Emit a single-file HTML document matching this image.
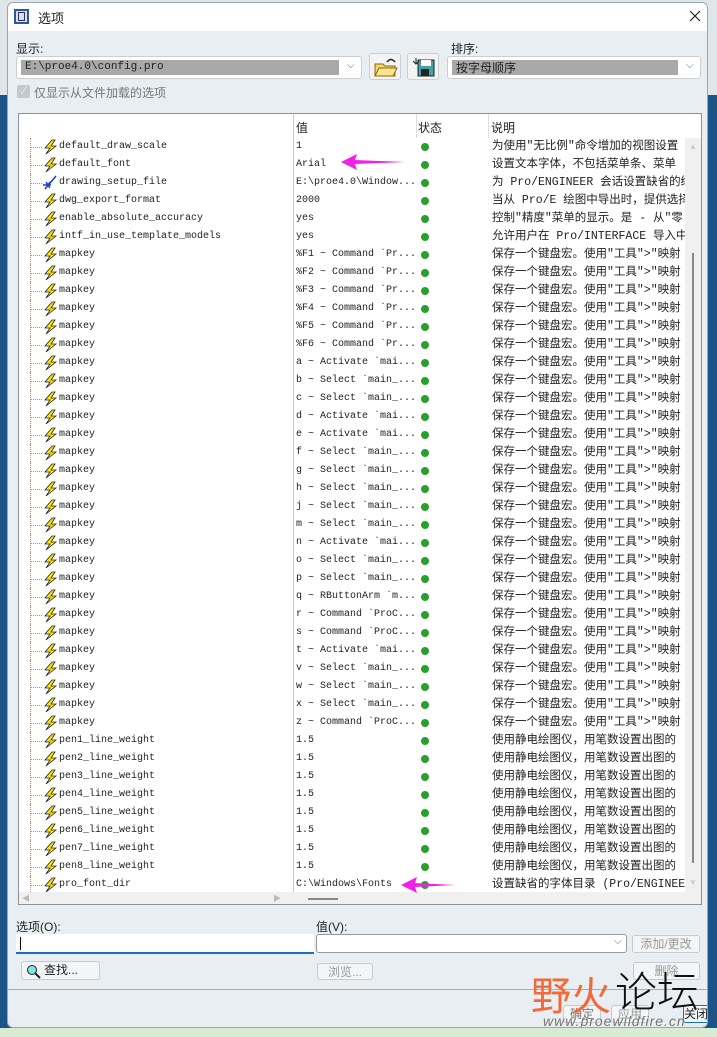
<!DOCTYPE html>
<html><head><meta charset="utf-8">
<style>
*{margin:0;padding:0;box-sizing:border-box}
body{width:717px;height:1037px;position:relative;overflow:hidden;background:#1d5487;font-family:"Liberation Sans","Noto Sans CJK SC",sans-serif;}
.a{position:absolute}
#dlg{left:7px;top:2px;width:701px;height:1026px;background:#e8eef1;border-radius:6px;overflow:hidden;border:1px solid #9aa5ad}
#title{left:0;top:0;width:701px;height:28px;background:#fff}
.lbl{font-size:12px;color:#222}
.box{background:#fff;border:1px solid #c9cfd4;border-radius:3px}
.sel{background:#a9a9a9;font-family:"Liberation Mono",monospace;font-size:11px;color:#222;line-height:17px;padding-left:4px}
.btn{background:#f3f5f7;border:1px solid #c5cbd0;border-radius:3px;font-size:12px;color:#999;text-align:center;line-height:17px}
#list{left:10px;top:110px;width:684px;height:792px;background:#fff;border:1px solid #8c9298}
.row{position:absolute;left:0;height:18px;width:666px;font-family:"Liberation Mono",monospace;font-size:10px;color:#222;line-height:18px;white-space:nowrap}
.row .n{position:absolute;left:40px}
.row .v{position:absolute;left:277px}
.row .d{position:absolute;left:473px;width:193px;overflow:hidden;font-family:"Liberation Mono","Noto Sans CJK SC",monospace;font-size:11.5px}
.row .dot{position:absolute;left:402px;top:5px;width:8px;height:8px;border-radius:50%;background:#2aa02a}
.row .t{position:absolute;left:12px;top:9px;width:11px;border-top:1px dotted #999}
.row .tv{position:absolute;left:11px;top:0;height:18px;border-left:1px dotted #999}
.row svg{position:absolute;left:23px;top:1px}
</style></head><body>
<div class="a" style="left:0;top:0;width:717px;height:95px;background:#dfe6ea"></div>
<div class="a" style="left:0;top:1028px;width:717px;height:9px;background:#d8ecd2"></div>
<div id="dlg" class="a">
 <div id="title" class="a">
  <div class="a" style="left:6px;top:6px;width:15px;height:15px;border:2px solid #2a5a9a;background:#dde"></div>
  <div class="a" style="left:10px;top:9px;width:7px;height:9px;border:1px solid #335"></div>
  <div class="a lbl" style="left:30px;top:5px;font-size:13px">选项</div>
  <svg class="a" style="left:681px;top:7px" width="12" height="12"><path d="M1 1L11 11M11 1L1 11" stroke="#222" stroke-width="1.2"/></svg>
 </div>
 <div class="a lbl" style="left:8px;top:37px">显示:</div>
 <div class="a box" style="left:8px;top:53px;width:346px;height:23px"><div class="a sel" style="left:4px;top:3px;width:318px;height:15px;line-height:15px">E:\proe4.0\config.pro</div><div class="a" style="left:330px;top:3px;font-size:10px;color:#666">⌵</div></div>
 <div class="a box" style="left:361px;top:50px;width:32px;height:27px;background:#f4f4f4"><svg width="26" height="22" style="position:absolute;left:3px;top:2px"><path d="M2 8h8l2 2h10v10H2z" fill="#f4d36a" stroke="#8a6a10"/><path d="M2 20l4-8h18l-4 8z" fill="#fce48a" stroke="#8a6a10"/><path d="M14 6q4-5 8 0" stroke="#222" fill="none" stroke-width="1.5"/></svg></div>
 <div class="a box" style="left:399px;top:50px;width:32px;height:27px;background:#f4f4f4"><svg width="26" height="22" style="position:absolute;left:4px;top:2px"><rect x="6" y="4" width="16" height="16" fill="#4aa0a8" stroke="#222"/><rect x="9" y="4" width="10" height="6" fill="#fff"/><rect x="9" y="13" width="8" height="7" fill="#222"/><path d="M4 2v6M1 5l3 3 3-3" stroke="#222" fill="none"/></svg></div>
 <div class="a lbl" style="left:443px;top:37px">排序:</div>
 <div class="a box" style="left:439px;top:53px;width:254px;height:23px"><div class="a sel" style="left:4px;top:3px;width:226px;height:15px;line-height:15px;font-family:'Noto Sans CJK SC',sans-serif;font-size:12px">按字母顺序</div><div class="a" style="left:238px;top:3px;font-size:10px;color:#666">⌵</div></div>
 <div class="a" style="left:9px;top:82px;width:13px;height:13px;background:#c5c9cc;border-radius:2px;color:#eee;font-size:10px;line-height:13px;text-align:center">✓</div>
 <div class="a lbl" style="left:26px;top:81px;color:#777">仅显示从文件加载的选项</div>

 <div id="list" class="a">
  <div class="a" style="left:274px;top:0;width:1px;height:790px;background:#ccc"></div>
  <div class="a lbl" style="left:277px;top:5px">值</div>
  <div class="a" style="left:397px;top:0;width:1px;height:24px;background:#ddd"></div>
  <div class="a lbl" style="left:399px;top:5px">状态</div>
  <div class="a" style="left:469px;top:0;width:1px;height:24px;background:#ddd"></div>
  <div class="a lbl" style="left:472px;top:5px">说明</div>
  <div class="a" style="left:666px;top:24px;width:16px;height:754px;background:#f0f0f0"><div class="a" style="left:7px;top:115px;width:2px;height:610px;background:#888"></div><div class="a" style="left:4px;top:4px;font-size:8px;color:#ccc">▲</div><div class="a" style="left:4px;top:740px;font-size:8px;color:#ccc">▼</div></div>
  <div class="a" style="left:0;top:778px;width:682px;height:12px;background:#f0f0f0"><div class="a" style="left:3px;top:1px;font-size:8px;color:#bbb">◀</div><div class="a" style="left:254px;top:1px;font-size:8px;color:#bbb">▶</div><div class="a" style="left:289px;top:6px;width:30px;height:2px;background:#888"></div></div>
  <div class="a" style="left:0;top:24px;width:666px;height:754px;overflow:hidden" id="rows">
<div class="row" style="top:0px"><div class="tv"></div><div class="t"></div><svg width="16" height="16"><path d="M10 1L3 9h5l-4 6 10-8H9l4-6z" fill="#ffe800" stroke="#222" stroke-width=".8"/></svg><span class="n">default_draw_scale</span><span class="v">1</span><span class="dot"></span><span class="d">为使用"无比例"命令增加的视图设置</span></div>
<div class="row" style="top:18px"><div class="tv"></div><div class="t"></div><svg width="16" height="16"><path d="M10 1L3 9h5l-4 6 10-8H9l4-6z" fill="#ffe800" stroke="#222" stroke-width=".8"/></svg><span class="n">default_font</span><span class="v">Arial</span><span class="dot"></span><span class="d">设置文本字体，不包括菜单条、菜单</span></div>
<div class="row" style="top:36px"><div class="tv"></div><div class="t"></div><svg width="16" height="16"><path d="M14 1L3 14M1 10h8M4 7l4 6M8 7l-4 6" stroke="#1a3ad0" stroke-width="1.5" fill="none"/></svg><span class="n">drawing_setup_file</span><span class="v">E:\proe4.0\Window...</span><span class="dot"></span><span class="d">为 Pro/ENGINEER 会话设置缺省的绘</span></div>
<div class="row" style="top:54px"><div class="tv"></div><div class="t"></div><svg width="16" height="16"><path d="M10 1L3 9h5l-4 6 10-8H9l4-6z" fill="#ffe800" stroke="#222" stroke-width=".8"/></svg><span class="n">dwg_export_format</span><span class="v">2000</span><span class="dot"></span><span class="d">当从 Pro/E 绘图中导出时，提供选择</span></div>
<div class="row" style="top:72px"><div class="tv"></div><div class="t"></div><svg width="16" height="16"><path d="M10 1L3 9h5l-4 6 10-8H9l4-6z" fill="#ffe800" stroke="#222" stroke-width=".8"/></svg><span class="n">enable_absolute_accuracy</span><span class="v">yes</span><span class="dot"></span><span class="d">控制"精度"菜单的显示。是 - 从"零</span></div>
<div class="row" style="top:90px"><div class="tv"></div><div class="t"></div><svg width="16" height="16"><path d="M10 1L3 9h5l-4 6 10-8H9l4-6z" fill="#ffe800" stroke="#222" stroke-width=".8"/></svg><span class="n">intf_in_use_template_models</span><span class="v">yes</span><span class="dot"></span><span class="d">允许用户在 Pro/INTERFACE 导入中使</span></div>
<div class="row" style="top:108px"><div class="tv"></div><div class="t"></div><svg width="16" height="16"><path d="M10 1L3 9h5l-4 6 10-8H9l4-6z" fill="#ffe800" stroke="#222" stroke-width=".8"/></svg><span class="n">mapkey</span><span class="v">%F1 ~ Command `Pr...</span><span class="dot"></span><span class="d">保存一个键盘宏。使用"工具">"映射</span></div>
<div class="row" style="top:126px"><div class="tv"></div><div class="t"></div><svg width="16" height="16"><path d="M10 1L3 9h5l-4 6 10-8H9l4-6z" fill="#ffe800" stroke="#222" stroke-width=".8"/></svg><span class="n">mapkey</span><span class="v">%F2 ~ Command `Pr...</span><span class="dot"></span><span class="d">保存一个键盘宏。使用"工具">"映射</span></div>
<div class="row" style="top:144px"><div class="tv"></div><div class="t"></div><svg width="16" height="16"><path d="M10 1L3 9h5l-4 6 10-8H9l4-6z" fill="#ffe800" stroke="#222" stroke-width=".8"/></svg><span class="n">mapkey</span><span class="v">%F3 ~ Command `Pr...</span><span class="dot"></span><span class="d">保存一个键盘宏。使用"工具">"映射</span></div>
<div class="row" style="top:162px"><div class="tv"></div><div class="t"></div><svg width="16" height="16"><path d="M10 1L3 9h5l-4 6 10-8H9l4-6z" fill="#ffe800" stroke="#222" stroke-width=".8"/></svg><span class="n">mapkey</span><span class="v">%F4 ~ Command `Pr...</span><span class="dot"></span><span class="d">保存一个键盘宏。使用"工具">"映射</span></div>
<div class="row" style="top:180px"><div class="tv"></div><div class="t"></div><svg width="16" height="16"><path d="M10 1L3 9h5l-4 6 10-8H9l4-6z" fill="#ffe800" stroke="#222" stroke-width=".8"/></svg><span class="n">mapkey</span><span class="v">%F5 ~ Command `Pr...</span><span class="dot"></span><span class="d">保存一个键盘宏。使用"工具">"映射</span></div>
<div class="row" style="top:198px"><div class="tv"></div><div class="t"></div><svg width="16" height="16"><path d="M10 1L3 9h5l-4 6 10-8H9l4-6z" fill="#ffe800" stroke="#222" stroke-width=".8"/></svg><span class="n">mapkey</span><span class="v">%F6 ~ Command `Pr...</span><span class="dot"></span><span class="d">保存一个键盘宏。使用"工具">"映射</span></div>
<div class="row" style="top:216px"><div class="tv"></div><div class="t"></div><svg width="16" height="16"><path d="M10 1L3 9h5l-4 6 10-8H9l4-6z" fill="#ffe800" stroke="#222" stroke-width=".8"/></svg><span class="n">mapkey</span><span class="v">a ~ Activate `mai...</span><span class="dot"></span><span class="d">保存一个键盘宏。使用"工具">"映射</span></div>
<div class="row" style="top:234px"><div class="tv"></div><div class="t"></div><svg width="16" height="16"><path d="M10 1L3 9h5l-4 6 10-8H9l4-6z" fill="#ffe800" stroke="#222" stroke-width=".8"/></svg><span class="n">mapkey</span><span class="v">b ~ Select `main_...</span><span class="dot"></span><span class="d">保存一个键盘宏。使用"工具">"映射</span></div>
<div class="row" style="top:252px"><div class="tv"></div><div class="t"></div><svg width="16" height="16"><path d="M10 1L3 9h5l-4 6 10-8H9l4-6z" fill="#ffe800" stroke="#222" stroke-width=".8"/></svg><span class="n">mapkey</span><span class="v">c ~ Select `main_...</span><span class="dot"></span><span class="d">保存一个键盘宏。使用"工具">"映射</span></div>
<div class="row" style="top:270px"><div class="tv"></div><div class="t"></div><svg width="16" height="16"><path d="M10 1L3 9h5l-4 6 10-8H9l4-6z" fill="#ffe800" stroke="#222" stroke-width=".8"/></svg><span class="n">mapkey</span><span class="v">d ~ Activate `mai...</span><span class="dot"></span><span class="d">保存一个键盘宏。使用"工具">"映射</span></div>
<div class="row" style="top:288px"><div class="tv"></div><div class="t"></div><svg width="16" height="16"><path d="M10 1L3 9h5l-4 6 10-8H9l4-6z" fill="#ffe800" stroke="#222" stroke-width=".8"/></svg><span class="n">mapkey</span><span class="v">e ~ Activate `mai...</span><span class="dot"></span><span class="d">保存一个键盘宏。使用"工具">"映射</span></div>
<div class="row" style="top:306px"><div class="tv"></div><div class="t"></div><svg width="16" height="16"><path d="M10 1L3 9h5l-4 6 10-8H9l4-6z" fill="#ffe800" stroke="#222" stroke-width=".8"/></svg><span class="n">mapkey</span><span class="v">f ~ Select `main_...</span><span class="dot"></span><span class="d">保存一个键盘宏。使用"工具">"映射</span></div>
<div class="row" style="top:324px"><div class="tv"></div><div class="t"></div><svg width="16" height="16"><path d="M10 1L3 9h5l-4 6 10-8H9l4-6z" fill="#ffe800" stroke="#222" stroke-width=".8"/></svg><span class="n">mapkey</span><span class="v">g ~ Select `main_...</span><span class="dot"></span><span class="d">保存一个键盘宏。使用"工具">"映射</span></div>
<div class="row" style="top:342px"><div class="tv"></div><div class="t"></div><svg width="16" height="16"><path d="M10 1L3 9h5l-4 6 10-8H9l4-6z" fill="#ffe800" stroke="#222" stroke-width=".8"/></svg><span class="n">mapkey</span><span class="v">h ~ Select `main_...</span><span class="dot"></span><span class="d">保存一个键盘宏。使用"工具">"映射</span></div>
<div class="row" style="top:360px"><div class="tv"></div><div class="t"></div><svg width="16" height="16"><path d="M10 1L3 9h5l-4 6 10-8H9l4-6z" fill="#ffe800" stroke="#222" stroke-width=".8"/></svg><span class="n">mapkey</span><span class="v">j ~ Select `main_...</span><span class="dot"></span><span class="d">保存一个键盘宏。使用"工具">"映射</span></div>
<div class="row" style="top:378px"><div class="tv"></div><div class="t"></div><svg width="16" height="16"><path d="M10 1L3 9h5l-4 6 10-8H9l4-6z" fill="#ffe800" stroke="#222" stroke-width=".8"/></svg><span class="n">mapkey</span><span class="v">m ~ Select `main_...</span><span class="dot"></span><span class="d">保存一个键盘宏。使用"工具">"映射</span></div>
<div class="row" style="top:396px"><div class="tv"></div><div class="t"></div><svg width="16" height="16"><path d="M10 1L3 9h5l-4 6 10-8H9l4-6z" fill="#ffe800" stroke="#222" stroke-width=".8"/></svg><span class="n">mapkey</span><span class="v">n ~ Activate `mai...</span><span class="dot"></span><span class="d">保存一个键盘宏。使用"工具">"映射</span></div>
<div class="row" style="top:414px"><div class="tv"></div><div class="t"></div><svg width="16" height="16"><path d="M10 1L3 9h5l-4 6 10-8H9l4-6z" fill="#ffe800" stroke="#222" stroke-width=".8"/></svg><span class="n">mapkey</span><span class="v">o ~ Select `main_...</span><span class="dot"></span><span class="d">保存一个键盘宏。使用"工具">"映射</span></div>
<div class="row" style="top:432px"><div class="tv"></div><div class="t"></div><svg width="16" height="16"><path d="M10 1L3 9h5l-4 6 10-8H9l4-6z" fill="#ffe800" stroke="#222" stroke-width=".8"/></svg><span class="n">mapkey</span><span class="v">p ~ Select `main_...</span><span class="dot"></span><span class="d">保存一个键盘宏。使用"工具">"映射</span></div>
<div class="row" style="top:450px"><div class="tv"></div><div class="t"></div><svg width="16" height="16"><path d="M10 1L3 9h5l-4 6 10-8H9l4-6z" fill="#ffe800" stroke="#222" stroke-width=".8"/></svg><span class="n">mapkey</span><span class="v">q ~ RButtonArm `m...</span><span class="dot"></span><span class="d">保存一个键盘宏。使用"工具">"映射</span></div>
<div class="row" style="top:468px"><div class="tv"></div><div class="t"></div><svg width="16" height="16"><path d="M10 1L3 9h5l-4 6 10-8H9l4-6z" fill="#ffe800" stroke="#222" stroke-width=".8"/></svg><span class="n">mapkey</span><span class="v">r ~ Command `ProC...</span><span class="dot"></span><span class="d">保存一个键盘宏。使用"工具">"映射</span></div>
<div class="row" style="top:486px"><div class="tv"></div><div class="t"></div><svg width="16" height="16"><path d="M10 1L3 9h5l-4 6 10-8H9l4-6z" fill="#ffe800" stroke="#222" stroke-width=".8"/></svg><span class="n">mapkey</span><span class="v">s ~ Command `ProC...</span><span class="dot"></span><span class="d">保存一个键盘宏。使用"工具">"映射</span></div>
<div class="row" style="top:504px"><div class="tv"></div><div class="t"></div><svg width="16" height="16"><path d="M10 1L3 9h5l-4 6 10-8H9l4-6z" fill="#ffe800" stroke="#222" stroke-width=".8"/></svg><span class="n">mapkey</span><span class="v">t ~ Activate `mai...</span><span class="dot"></span><span class="d">保存一个键盘宏。使用"工具">"映射</span></div>
<div class="row" style="top:522px"><div class="tv"></div><div class="t"></div><svg width="16" height="16"><path d="M10 1L3 9h5l-4 6 10-8H9l4-6z" fill="#ffe800" stroke="#222" stroke-width=".8"/></svg><span class="n">mapkey</span><span class="v">v ~ Select `main_...</span><span class="dot"></span><span class="d">保存一个键盘宏。使用"工具">"映射</span></div>
<div class="row" style="top:540px"><div class="tv"></div><div class="t"></div><svg width="16" height="16"><path d="M10 1L3 9h5l-4 6 10-8H9l4-6z" fill="#ffe800" stroke="#222" stroke-width=".8"/></svg><span class="n">mapkey</span><span class="v">w ~ Select `main_...</span><span class="dot"></span><span class="d">保存一个键盘宏。使用"工具">"映射</span></div>
<div class="row" style="top:558px"><div class="tv"></div><div class="t"></div><svg width="16" height="16"><path d="M10 1L3 9h5l-4 6 10-8H9l4-6z" fill="#ffe800" stroke="#222" stroke-width=".8"/></svg><span class="n">mapkey</span><span class="v">x ~ Select `main_...</span><span class="dot"></span><span class="d">保存一个键盘宏。使用"工具">"映射</span></div>
<div class="row" style="top:576px"><div class="tv"></div><div class="t"></div><svg width="16" height="16"><path d="M10 1L3 9h5l-4 6 10-8H9l4-6z" fill="#ffe800" stroke="#222" stroke-width=".8"/></svg><span class="n">mapkey</span><span class="v">z ~ Command `ProC...</span><span class="dot"></span><span class="d">保存一个键盘宏。使用"工具">"映射</span></div>
<div class="row" style="top:594px"><div class="tv"></div><div class="t"></div><svg width="16" height="16"><path d="M10 1L3 9h5l-4 6 10-8H9l4-6z" fill="#ffe800" stroke="#222" stroke-width=".8"/></svg><span class="n">pen1_line_weight</span><span class="v">1.5</span><span class="dot"></span><span class="d">使用静电绘图仪，用笔数设置出图的</span></div>
<div class="row" style="top:612px"><div class="tv"></div><div class="t"></div><svg width="16" height="16"><path d="M10 1L3 9h5l-4 6 10-8H9l4-6z" fill="#ffe800" stroke="#222" stroke-width=".8"/></svg><span class="n">pen2_line_weight</span><span class="v">1.5</span><span class="dot"></span><span class="d">使用静电绘图仪，用笔数设置出图的</span></div>
<div class="row" style="top:630px"><div class="tv"></div><div class="t"></div><svg width="16" height="16"><path d="M10 1L3 9h5l-4 6 10-8H9l4-6z" fill="#ffe800" stroke="#222" stroke-width=".8"/></svg><span class="n">pen3_line_weight</span><span class="v">1.5</span><span class="dot"></span><span class="d">使用静电绘图仪，用笔数设置出图的</span></div>
<div class="row" style="top:648px"><div class="tv"></div><div class="t"></div><svg width="16" height="16"><path d="M10 1L3 9h5l-4 6 10-8H9l4-6z" fill="#ffe800" stroke="#222" stroke-width=".8"/></svg><span class="n">pen4_line_weight</span><span class="v">1.5</span><span class="dot"></span><span class="d">使用静电绘图仪，用笔数设置出图的</span></div>
<div class="row" style="top:666px"><div class="tv"></div><div class="t"></div><svg width="16" height="16"><path d="M10 1L3 9h5l-4 6 10-8H9l4-6z" fill="#ffe800" stroke="#222" stroke-width=".8"/></svg><span class="n">pen5_line_weight</span><span class="v">1.5</span><span class="dot"></span><span class="d">使用静电绘图仪，用笔数设置出图的</span></div>
<div class="row" style="top:684px"><div class="tv"></div><div class="t"></div><svg width="16" height="16"><path d="M10 1L3 9h5l-4 6 10-8H9l4-6z" fill="#ffe800" stroke="#222" stroke-width=".8"/></svg><span class="n">pen6_line_weight</span><span class="v">1.5</span><span class="dot"></span><span class="d">使用静电绘图仪，用笔数设置出图的</span></div>
<div class="row" style="top:702px"><div class="tv"></div><div class="t"></div><svg width="16" height="16"><path d="M10 1L3 9h5l-4 6 10-8H9l4-6z" fill="#ffe800" stroke="#222" stroke-width=".8"/></svg><span class="n">pen7_line_weight</span><span class="v">1.5</span><span class="dot"></span><span class="d">使用静电绘图仪，用笔数设置出图的</span></div>
<div class="row" style="top:720px"><div class="tv"></div><div class="t"></div><svg width="16" height="16"><path d="M10 1L3 9h5l-4 6 10-8H9l4-6z" fill="#ffe800" stroke="#222" stroke-width=".8"/></svg><span class="n">pen8_line_weight</span><span class="v">1.5</span><span class="dot"></span><span class="d">使用静电绘图仪，用笔数设置出图的</span></div>
<div class="row" style="top:738px"><div class="tv"></div><div class="t"></div><svg width="16" height="16"><path d="M10 1L3 9h5l-4 6 10-8H9l4-6z" fill="#ffe800" stroke="#222" stroke-width=".8"/></svg><span class="n">pro_font_dir</span><span class="v">C:\Windows\Fonts</span><span class="dot"></span><span class="d">设置缺省的字体目录 (Pro/ENGINEER</span></div>
  </div>
  <svg class="a" style="left:322px;top:40px" width="70" height="16"><path d="M0 8L16 0L14 6L64 8L14 10L16 16z" fill="#f020e8"/></svg>
  <svg class="a" style="left:382px;top:763px" width="56" height="16"><path d="M0 8L16 0L14 6L54 8L14 10L16 16z" fill="#f020e8"/></svg>
 </div>

 <div class="a lbl" style="left:8px;top:915px">选项(O):</div>
 <div class="a" style="left:8px;top:931px;width:298px;height:20px;background:#fff;border-bottom:2px solid #1a6fc0"><div class="a" style="left:4px;top:3px;width:1px;height:13px;background:#000"></div></div>
 <div class="a lbl" style="left:308px;top:915px">值(V):</div>
 <div class="a box" style="left:308px;top:931px;width:311px;height:19px;border-color:#999"><div class="a" style="left:297px;top:1px;font-size:10px;color:#666">⌵</div></div>
 <div class="a btn" style="left:624px;top:932px;width:68px;height:18px">添加/更改</div>
 <div class="a btn" style="left:13px;top:958px;width:79px;height:19px;color:#222;text-align:left;padding-left:22px">查找...<svg class="a" style="left:4px;top:2px" width="15" height="15"><circle cx="6" cy="6" r="4.5" fill="#7ee6e6" stroke="#222"/><path d="M9 9l5 5" stroke="#222" stroke-width="2"/></svg></div>
 <div class="a btn" style="left:309px;top:960px;width:56px;height:17px">浏览...</div>
 <div class="a btn" style="left:625px;top:959px;width:67px;height:18px">删除</div>
 <div class="a" style="left:0;top:986px;width:701px;height:1px;background:#a8adb2"></div>
 <div class="a btn" style="left:555px;top:1002px;width:38px;height:18px;color:#777">确定</div>
 <div class="a btn" style="left:603px;top:1002px;width:38px;height:18px;color:#999">应用</div>
 <div class="a btn" style="left:675px;top:1002px;width:26px;height:18px;color:#222;border:1.5px solid #1a6fc0">关闭</div>
 <div class="a" style="left:523px;top:965px;font-size:40px;color:#f26a3a;font-family:'Noto Sans CJK SC',sans-serif;line-height:50px">野火</div>
 <div class="a" style="left:607px;top:962px;font-size:42px;color:#111;font-family:'Noto Sans CJK SC',sans-serif;line-height:50px;font-weight:300">论坛</div>
 <div class="a" style="left:535px;top:1010px;font-size:14px;color:#777;font-style:italic;letter-spacing:1px">www.proewildfire.cn</div>
</div>
</body></html>
